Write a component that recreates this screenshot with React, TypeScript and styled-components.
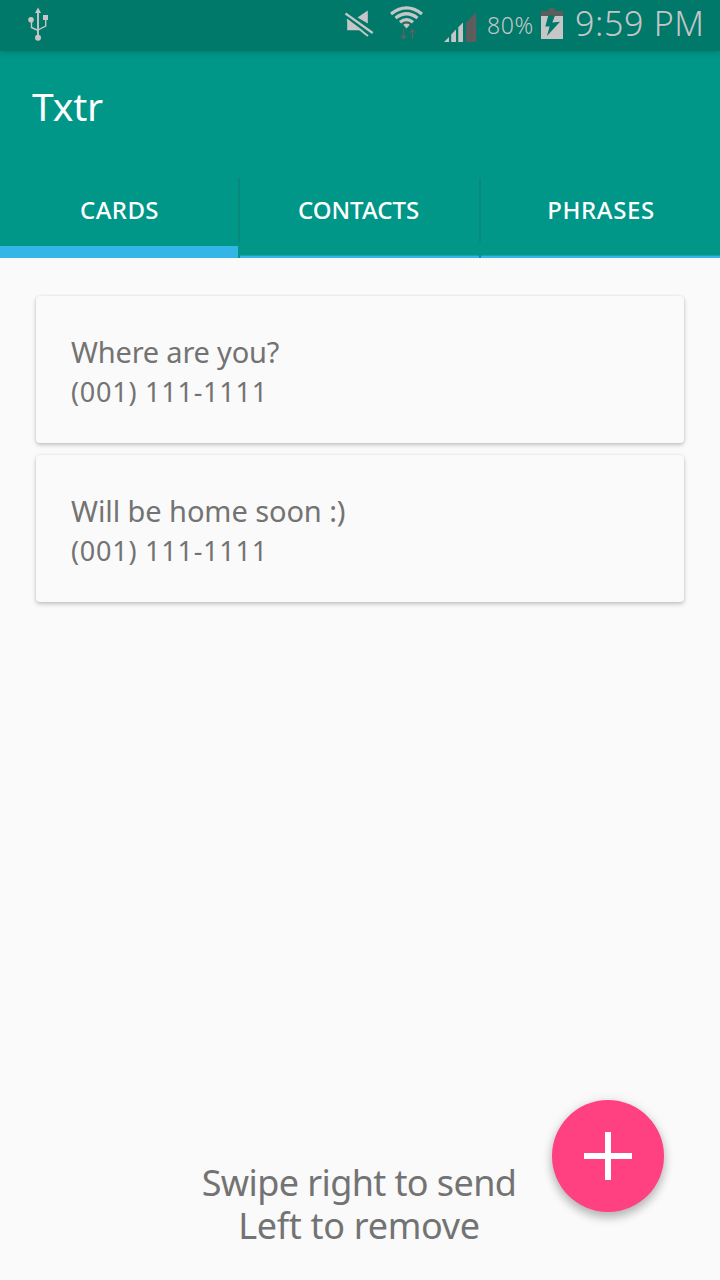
import React from 'react';
import styled, { createGlobalStyle } from 'styled-components';

const GlobalStyle = createGlobalStyle`
  * { box-sizing: border-box; }
  body { margin: 0; background: #fafafa; }
`;

const Screen = styled.div`
  position: relative;
  display: flex;
  flex-direction: column;
  width: 720px;
  height: 1280px;
  overflow: hidden;
  background: #fafafa;
  color: #737373;
  font-family: 'Noto Sans', 'Open Sans', sans-serif;
  white-space: nowrap;
`;

const StatusBar = styled.div`
  position: relative;
  z-index: 1;
  display: flex;
  align-items: flex-start;
  height: 51px;
  padding-left: 24px;
  background: #00796b;
  box-shadow: 0 1px 6px rgba(0, 60, 50, 0.35);
  color: #c6c6c6;
`;

const StatusIcon = styled.svg<{ $left?: number }>`
  display: block;
  flex: none;
  margin-left: ${({ $left }) => $left ?? 0}px;
`;

const BatteryLevel = styled.span`
  width: 51px;
  margin: 8px 0 0 7px;
  font-size: 23px;
  font-weight: 300;
  line-height: 34px;
  letter-spacing: 0.6px;
`;

const Clock = styled.span`
  margin: 0 0 0 10px;
  font-size: 34px;
  font-weight: 300;
  line-height: 47px;
  letter-spacing: 0.65px;
`;

const AppBar = styled.header`
  display: flex;
  align-items: center;
  height: 111px;
  padding: 0 0 2px 32px;
  background: #009688;
`;

const Title = styled.h1`
  margin: 0;
  color: #fff;
  font-size: 39px;
  font-weight: 400;
  line-height: 56px;
  letter-spacing: -0.2px;
`;

const TabBar = styled.nav`
  display: grid;
  grid-template-columns: 238px 2px 239px 2px 239px;
  height: 96px;
  background: #009688;
`;

const Tab = styled.button<{ $active?: boolean; $spacing: number }>`
  display: flex;
  align-items: center;
  justify-content: center;
  padding: 0 ${({ $spacing }) => ($spacing ? 0 : 2)}px 2px ${({ $spacing }) => ($spacing ? 1 : 0)}px;
  border: 0;
  background: transparent;
  box-shadow: ${({ $active }) =>
    $active ? 'inset 0 -12px #33b5e5' : 'inset 0 -2px #33b5e5, inset 0 -3px #16a3ad'};
  color: #fff;
  font: 500 24px/33px 'Noto Sans', sans-serif;
  letter-spacing: ${({ $spacing }) => $spacing}px;
`;

const Divider = styled.span`
  height: 64px;
  margin-top: 16px;
  background: #07897c;
`;

const CardList = styled.main`
  display: flex;
  flex: 1;
  flex-direction: column;
  gap: 12px;
  padding: 38px 36px 0;
`;

const Card = styled.article`
  height: 147px;
  padding: 35px;
  border-radius: 4px;
  background: #fafafa;
  box-shadow: 0 2px 4px rgba(0, 0, 0, 0.22), 0 0 3px rgba(0, 0, 0, 0.08);
`;

const Message = styled.p<{ $spacing: number }>`
  margin: 0;
  font-size: 29px;
  line-height: 42px;
  letter-spacing: ${({ $spacing }) => $spacing}px;
`;

const Phone = styled.p`
  margin: 0;
  font-size: 27px;
  line-height: 38px;
  letter-spacing: 0.75px;
`;

const Hint = styled.footer`
  height: 119px;
  padding-right: 2px;
  font-size: 36px;
  line-height: 43px;
  text-align: center;
`;

const HintLine = styled.p<{ $spacing: number }>`
  margin: 0;
  letter-spacing: ${({ $spacing }) => $spacing}px;
`;

const AddButton = styled.button`
  position: absolute;
  right: 56px;
  bottom: 68px;
  display: grid;
  place-items: center;
  width: 112px;
  height: 112px;
  padding: 0;
  border: 0;
  border-radius: 50%;
  background: #ff4081;
  box-shadow: 0 6px 10px rgba(0, 0, 0, 0.22), 0 1px 12px rgba(0, 0, 0, 0.12);
`;

const cards = [
  { message: 'Where are you?', phone: '(001) 111-1111', spacing: -0.2 },
  { message: 'Will be home soon :)', phone: '(001) 111-1111', spacing: -0.08 },
];

const UsbIcon = () => (
  <StatusIcon width="28" height="51" viewBox="24 0 28 51">
    <g fill="none" stroke="#c6c6c6" strokeWidth="1.4">
      <path d="M38 12V37" strokeWidth="1.9" />
      <path d="M31.5 20V27.5L38 30.5M45.7 18V26L38 30" />
    </g>
    <path d="M38 7.5L41 13H35Z" fill="#c6c6c6" />
    <circle cx="31" cy="19.7" r="2.8" fill="#c6c6c6" />
    <circle cx="38" cy="37.7" r="3" fill="#c6c6c6" />
    <path d="M43 15H48V20H43Z" fill="#c6c6c6" />
  </StatusIcon>
);

const MuteIcon = () => (
  <StatusIcon $left={291} width="34" height="51" viewBox="343 0 34 51">
    <g fill="#c6c6c6">
      <path d="M367.8 10.5V23.5L357.5 17.5Z" />
      <path d="M347.2 19.5L364.5 30.3H347.2Z" />
    </g>
    <path d="M345.5 13.5L372.7 33" stroke="#c6c6c6" strokeWidth="2.2" />
    <path d="M347.2 19.3L368 36" stroke="#c6c6c6" strokeWidth="2" />
    <path d="M347 17.2L371 35.5" stroke="#00796b" strokeWidth="1.8" />
  </StatusIcon>
);

const WifiIcon = () => (
  <StatusIcon $left={11} width="38" height="51" viewBox="388 0 38 51">
    <g fill="none" stroke="#c6c6c6" strokeWidth="3.2">
      <path d="M391 14Q406.5 1.8 422 14" />
      <path d="M395.5 18Q406.5 9.5 417.5 18" />
      <path d="M400 22.2Q406.5 17 413 22.2" />
    </g>
    <path d="M403 24.5Q406.5 21.8 410 24.5L406.5 28.5Z" fill="#c6c6c6" />
    <path d="M402.7 24.2Q406.5 21.3 410.3 24.2" fill="none" stroke="#5d5d5d" strokeWidth="1.3" />
    <path
      d="M403.7 29V38M401 35.5L403.7 38.5L406.4 35.5M412.5 39V30M409.8 32.7L412.5 29.7L415.2 32.7"
      fill="none"
      stroke="#606060"
      strokeWidth="1.3"
    />
  </StatusIcon>
);

const SignalIcon = () => (
  <StatusIcon $left={16} width="38" height="51" viewBox="442 0 38 51">
    <g fill="#c6c6c6">
      <path d="M444 42L449 37V42Z" />
      <path d="M451.2 34.4L456 29.6V42H451.2Z" />
      <path d="M458.3 27.3L463 22.6V42H458.3Z" />
    </g>
    <path d="M466 22.6L476.3 12.3V42H466Z" fill="#5d5d5d" />
  </StatusIcon>
);

const BatteryIcon = () => (
  <StatusIcon $left={1} width="26" height="51" viewBox="539 0 26 51">
    <path d="M549 8H555V11H563V17H541V11H549Z" fill="#5d5d5d" />
    <path d="M541 16H563V39H541Z" fill="#c6c6c6" />
    <path d="M548.3 15.5H555L552.3 22.5L560 21.8L547 36L549.6 26.5H545.3Z" fill="#00796b" />
  </StatusIcon>
);

export default function App() {
  return (
    <Screen>
      <GlobalStyle />
      <StatusBar>
        <UsbIcon />
        <MuteIcon />
        <WifiIcon />
        <SignalIcon />
        <BatteryLevel>80%</BatteryLevel>
        <BatteryIcon />
        <Clock>9:59 PM</Clock>
      </StatusBar>
      <AppBar>
        <Title>Txtr</Title>
      </AppBar>
      <TabBar>
        <Tab $active $spacing={0.4}>CARDS</Tab>
        <Divider />
        <Tab $spacing={0}>CONTACTS</Tab>
        <Divider />
        <Tab $spacing={0.6}>PHRASES</Tab>
      </TabBar>
      <CardList>
        {cards.map((card) => (
          <Card key={card.message}>
            <Message $spacing={card.spacing}>{card.message}</Message>
            <Phone>{card.phone}</Phone>
          </Card>
        ))}
      </CardList>
      <Hint>
        <HintLine $spacing={-0.6}>Swipe right to send</HintLine>
        <HintLine $spacing={-0.3}>Left to remove</HintLine>
      </Hint>
      <AddButton aria-label="Add card">
        <svg width="48" height="48" viewBox="0 0 48 48">
          <path d="M24 0V48M0 24H48" stroke="#fff" strokeWidth="6" />
        </svg>
      </AddButton>
    </Screen>
  );
}
